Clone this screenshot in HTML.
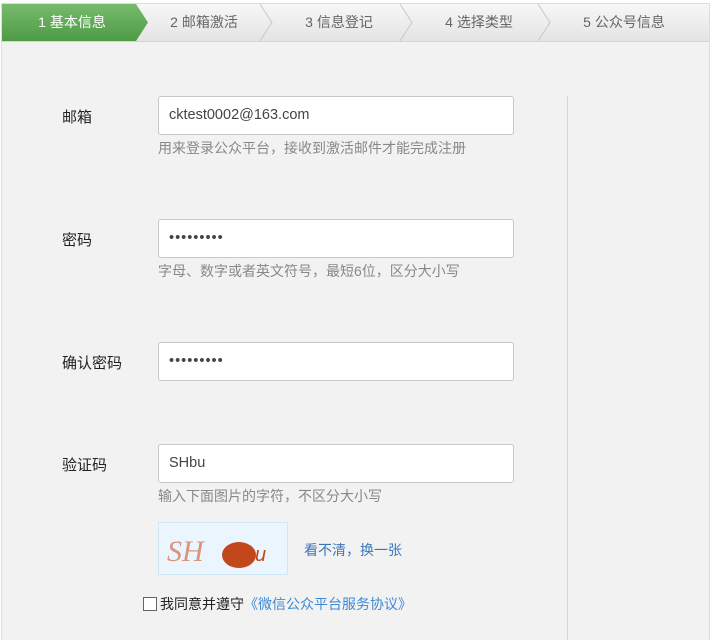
<!DOCTYPE html>
<html><head><meta charset="utf-8"><style>
html,body{margin:0;width:713px;height:640px;overflow:hidden}
body{background:#fff;font-family:"Liberation Sans","Noto Sans CJK SC",sans-serif;position:relative}
.box{position:absolute;left:1px;top:3px;width:707px;height:660px;background:#f2f2f2;border:1px solid #ddd;border-bottom:none}
.tabs{position:absolute;left:0;top:0;width:707px;height:37px;background:linear-gradient(#f7f7f7,#e4e4e4);border-bottom:1px solid #d4d4d4}
.tab{position:absolute;top:0;height:37px;line-height:37px;font-size:14px;color:#666;text-align:center}
.lbl{position:absolute;left:62px;font-size:15px;color:#222}
.inp{position:absolute;left:158px;width:354px;height:37px;background:#fff;border:1px solid #c8c8c8;border-radius:3px;font-size:14.5px;color:#444;line-height:37px}
.inp span{position:absolute;left:10px}
.hint{position:absolute;left:158px;font-size:14px;color:#888}
.vl{position:absolute;left:567px;top:96px;width:1px;height:560px;background:#d6d6d6}
</style></head><body>
<div class="box">
<div class="tabs">
<svg width="707" height="37" style="position:absolute;left:0;top:0">
<defs><linearGradient id="g" x1="0" y1="0" x2="0" y2="1"><stop offset="0" stop-color="#77bb6c"/><stop offset="1" stop-color="#4e9a45"/></linearGradient></defs>
<polygon points="0,0 134,0 146,18.5 134,37 0,37" fill="url(#g)"/>
<polyline points="258,0 270,18.5 258,37" fill="none" stroke="#c8c8c8"/>
<polyline points="398,0 410,18.5 398,37" fill="none" stroke="#c8c8c8"/>
<polyline points="536,0 548,18.5 536,37" fill="none" stroke="#c8c8c8"/>
</svg>
<div class="tab" style="left:0;width:140px;color:#fff">1 基本信息</div>
<div class="tab" style="left:140px;width:124px">2 邮箱激活</div>
<div class="tab" style="left:270px;width:134px">3 信息登记</div>
<div class="tab" style="left:410px;width:134px">4 选择类型</div>
<div class="tab" style="left:548px;width:148px">5 公众号信息</div>
</div>
</div>
<div class="vl"></div>
<div class="lbl" style="top:106px">邮箱</div>
<div class="inp" style="top:96px"><span>cktest0002@163.com</span></div>
<div class="hint" style="top:138px">用来登录公众平台，接收到激活邮件才能完成注册</div>
<div class="lbl" style="top:229px">密码</div>
<div class="inp" style="top:219px"><span style="letter-spacing:1px">•••••••••</span></div>
<div class="hint" style="top:261px">字母、数字或者英文符号，最短6位，区分大小写</div>
<div class="lbl" style="top:352px">确认密码</div>
<div class="inp" style="top:342px"><span style="letter-spacing:1px">•••••••••</span></div>
<div class="lbl" style="top:454px">验证码</div>
<div class="inp" style="top:444px"><span>SHbu</span></div>
<div class="hint" style="top:486px">输入下面图片的字符，不区分大小写</div>
<div style="position:absolute;left:158px;top:522px;width:128px;height:51px;background:#eaf5fd;border:1px solid #cfe6f7">
<svg width="128" height="51"><text x="8" y="38" font-size="30" font-family="Liberation Serif" fill="#d9957d" font-style="italic">SH</text><ellipse cx="80" cy="32" rx="17" ry="13" fill="#c2481c"/><text x="96" y="38" font-size="20" fill="#c2481c" font-style="italic">u</text></svg>
</div>
<div style="position:absolute;left:304px;top:540px;font-size:14px;color:#3d76b9">看不清，换一张</div>
<div style="position:absolute;left:143px;top:597px;width:12px;height:12px;border:1px solid #666;background:#fff"></div>
<div style="position:absolute;left:160px;top:594px;font-size:14px;color:#222">我同意并遵守<span style="color:#3d8ad6">《微信公众平台服务协议》</span></div>
</body></html>
